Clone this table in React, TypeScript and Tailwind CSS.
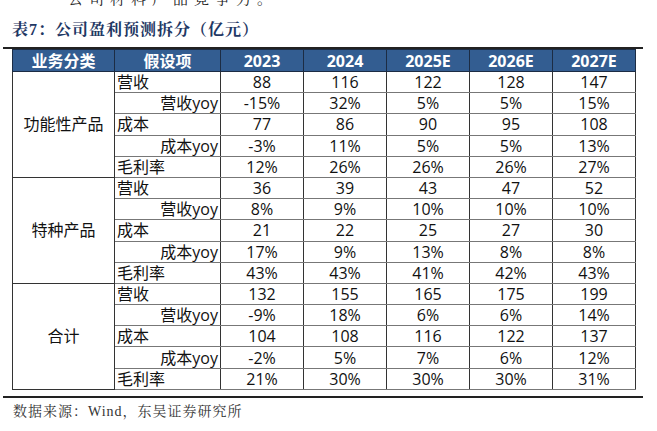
const years = ["2023", "2024", "2025E", "2026E", "2027E"];

type Row = { label: string; indent?: boolean; values: string[] };
type Group = { name: string; rows: Row[] };

const groups: Group[] = [
  {
    name: "功能性产品",
    rows: [
      { label: "营收", values: ["88", "116", "122", "128", "147"] },
      { label: "营收yoy", indent: true, values: ["-15%", "32%", "5%", "5%", "15%"] },
      { label: "成本", values: ["77", "86", "90", "95", "108"] },
      { label: "成本yoy", indent: true, values: ["-3%", "11%", "5%", "5%", "13%"] },
      { label: "毛利率", values: ["12%", "26%", "26%", "26%", "27%"] },
    ],
  },
  {
    name: "特种产品",
    rows: [
      { label: "营收", values: ["36", "39", "43", "47", "52"] },
      { label: "营收yoy", indent: true, values: ["8%", "9%", "10%", "10%", "10%"] },
      { label: "成本", values: ["21", "22", "25", "27", "30"] },
      { label: "成本yoy", indent: true, values: ["17%", "9%", "13%", "8%", "8%"] },
      { label: "毛利率", values: ["43%", "43%", "41%", "42%", "43%"] },
    ],
  },
  {
    name: "合计",
    rows: [
      { label: "营收", values: ["132", "155", "165", "175", "199"] },
      { label: "营收yoy", indent: true, values: ["-9%", "18%", "6%", "6%", "14%"] },
      { label: "成本", values: ["104", "108", "116", "122", "137"] },
      { label: "成本yoy", indent: true, values: ["-2%", "5%", "7%", "6%", "12%"] },
      { label: "毛利率", values: ["21%", "30%", "30%", "30%", "31%"] },
    ],
  },
];

const sans = "font-['Open_Sans','Noto_Sans_CJK_SC',sans-serif]";
const serif = "font-['Liberation_Serif','Noto_Serif_CJK_SC','Noto_Sans_CJK_SC',serif]";

export default function App() {
  return (
    <div className="w-[657px] h-[431px] bg-white overflow-hidden relative">
      <p className={`${serif} text-[15px] text-[#222] leading-none pl-[68px] -mt-[8px] tracking-[6px]`}>
        公司材料产品竞争力。
      </p>
      <h1 className={`${serif} text-[16px] font-bold text-[#1f3864] leading-none pl-[12px] mt-[15px] tracking-[1px]`}>
        表7：公司盈利预测拆分（亿元）
      </h1>
      <div className="mx-[3px] w-[640px] mt-[9px] border-t-2 border-[#222]" />
      <table className={`${sans} ml-[12px] mt-[0px] border-collapse text-[16px] text-[#111] leading-none`}>
        <thead>
          <tr className="h-[22px] bg-[#335d91] text-white font-bold">
            <th className="w-[102px] border border-[#1c2c44] font-bold">业务分类</th>
            <th className="w-[106px] border border-[#1c2c44] font-bold">假设项</th>
            {years.map((y) => (
              <th key={y} className="w-[83px] border border-[#1c2c44] font-bold">
                {y}
              </th>
            ))}
          </tr>
        </thead>
        <tbody>
          {groups.map((g) =>
            g.rows.map((r, i) => (
              <tr key={g.name + r.label} className="h-[21.2px]">
                {i === 0 && (
                  <td rowSpan={5} className="border border-[#333] text-center">
                    {g.name}
                  </td>
                )}
                <td
                  className={`border-y border-y-[#777] border-x border-x-[#333] px-[2px] ${
                    r.indent ? "text-right" : "text-left"
                  }`}
                >
                  {r.label}
                </td>
                {r.values.map((v, j) => (
                  <td key={j} className="border-y border-y-[#777] border-x border-x-[#333] text-center">
                    {v}
                  </td>
                ))}
              </tr>
            ))
          )}
        </tbody>
      </table>
      <div className="mx-[3px] w-[640px] mt-[6px] border-t-2 border-[#222]" />
      <p className={`${serif} text-[14px] text-[#333] leading-none pl-[13px] mt-[7px] tracking-[1px]`}>
        数据来源：Wind，东吴证券研究所
      </p>
    </div>
  );
}
